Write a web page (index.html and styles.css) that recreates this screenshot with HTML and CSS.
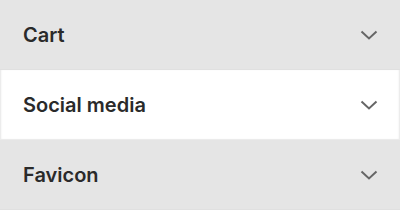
FILE: index.html
```html
<!DOCTYPE html>
<html>
<head>
<meta charset="utf-8">
<link rel="stylesheet" href="styles.css">
</head>
<body>
<div class="list">
  <div class="row">
    <span class="label">Cart</span>
    <svg class="chev" width="18" height="10" viewBox="0 0 18 10"><path d="M1.5 1.5 L9 8.5 L16.5 1.5" fill="none" stroke="#666" stroke-width="2"/></svg>
  </div>
  <div class="row active">
    <span class="label">Social media</span>
    <svg class="chev" width="18" height="10" viewBox="0 0 18 10"><path d="M1.5 1.5 L9 8.5 L16.5 1.5" fill="none" stroke="#666" stroke-width="2"/></svg>
  </div>
  <div class="row">
    <span class="label">Favicon</span>
    <svg class="chev" width="18" height="10" viewBox="0 0 18 10"><path d="M1.5 1.5 L9 8.5 L16.5 1.5" fill="none" stroke="#666" stroke-width="2"/></svg>
  </div>
</div>
</body>
</html>
```
FILE: styles.css
```css
html, body { margin: 0; padding: 0; background: #e5e5e5; }
.list { display: flex; flex-direction: column; width: 400px; }
.row {
  height: 70px;
  box-sizing: border-box;
  display: flex;
  align-items: center;
  justify-content: space-between;
  padding: 1px 22px 0 23px;
  background: #e5e5e5;
  border-bottom: 1px solid #e0e0e0;
}
.row.active { background: #fff; border-bottom: 1px solid #ebebeb; box-shadow: inset 2px 0 2px -1px #e6e6e6, inset -2px 0 2px -1px #e6e6e6; }
.label {
  font-family: Inter, "Noto Sans", sans-serif;
  font-weight: 600;
  font-size: 20px;
  color: #2a2a2a;
}
.chev { display: block; }
```
